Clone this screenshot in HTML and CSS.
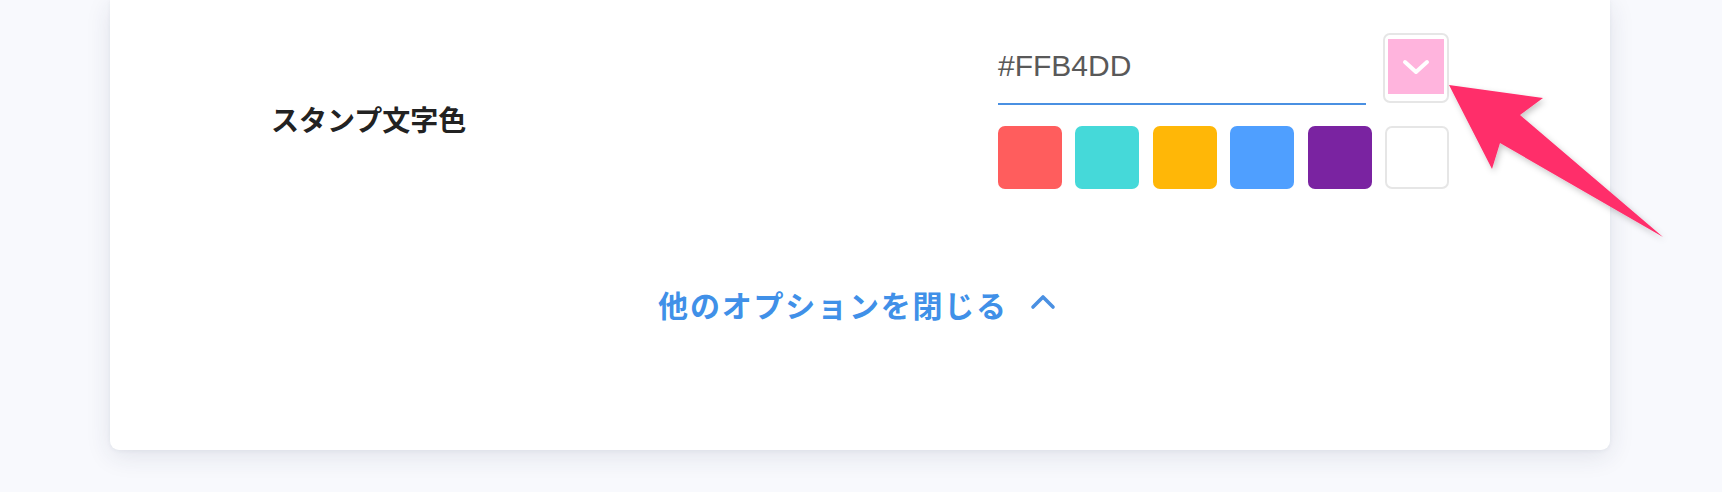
FILE: index.html
```html
<!DOCTYPE html>
<html lang="ja">
<head>
<meta charset="utf-8">
<title>スタンプ文字色</title>
<link rel="stylesheet" href="styles.css">
</head>
<body>
<div class="page">
  <div class="card">
    <div class="row">
      <div class="label">スタンプ文字色</div>
      <div class="control">
        <div class="input-row">
          <div class="hex-input">#FFB4DD</div>
          <button class="picker" type="button">
            <span class="picker-swatch">
              <svg width="28" height="16" viewBox="0 0 28 16"><path d="M3 3 L14 13 L25 3" fill="none" stroke="#fff" stroke-width="4" stroke-linecap="round" stroke-linejoin="round"/></svg>
            </span>
          </button>
        </div>
        <div class="swatches">
          <span class="swatch red"></span>
          <span class="swatch teal"></span>
          <span class="swatch yellow"></span>
          <span class="swatch blue"></span>
          <span class="swatch purple"></span>
          <span class="swatch white"></span>
        </div>
      </div>
    </div>
    <div class="more">
      <span class="more-text">他のオプションを閉じる</span>
      <svg class="more-icon" width="26" height="16" viewBox="0 0 26 16"><path d="M3 13 L13 3 L23 13" fill="none" stroke="#4a90e2" stroke-width="3.6" stroke-linecap="round" stroke-linejoin="round"/></svg>
    </div>
  </div>
  <svg class="arrow" width="1722" height="492" viewBox="0 0 1722 492">
    <defs>
      <filter id="sh" x="-20%" y="-20%" width="140%" height="140%">
        <feDropShadow dx="2" dy="3" stdDeviation="3" flood-color="#000" flood-opacity="0.22"/>
      </filter>
    </defs>
    <polygon points="1449,85 1543,98 1520,115 1663,237 1500,143 1492,169" fill="#ff2d6b" filter="url(#sh)"/>
  </svg>
</div>
</body>
</html>
```
FILE: styles.css
```css
html, body {
  margin: 0;
  padding: 0;
}
body {
  background: #f8f9fd;
  font-family: "Noto Sans CJK JP", "Liberation Sans", sans-serif;
  width: 1722px;
  height: 492px;
  overflow: hidden;
}
.page {
  position: relative;
  width: 1722px;
  height: 492px;
}
.card {
  margin-left: 110px;
  width: 1500px;
  height: 450px;
  background: #fff;
  border-radius: 0 0 9px 9px;
  box-shadow: 0 6px 26px rgba(40, 50, 80, 0.11), 0 1px 4px rgba(40, 50, 80, 0.05);
  box-sizing: border-box;
  padding-top: 33px;
}
.row {
  display: flex;
  justify-content: space-between;
  align-items: flex-start;
  padding: 0 161px 0 161px;
}
.label {
  font-size: 28px;
  font-weight: 700;
  color: #222;
  line-height: 40px;
  margin-top: 66px;
}
.control {
  width: 451px;
  display: flex;
  flex-direction: column;
  gap: 21px;
}
.input-row {
  display: flex;
  justify-content: space-between;
  align-items: flex-start;
}
.hex-input {
  width: 368px;
  height: 72px;
  box-sizing: border-box;
  border-bottom: 2px solid #4a90e2;
  font-family: "Liberation Sans", Arial, sans-serif;
  font-size: 30px;
  color: #595959;
  line-height: 34px;
  padding-top: 16px;
}
.picker {
  width: 66px;
  height: 70px;
  box-sizing: border-box;
  border: 2px solid #e6e6e6;
  border-radius: 7px;
  background: #fff;
  padding: 4px 3px 7px 3px;
  margin: 0;
  display: flex;
}
.picker-swatch {
  flex: 1;
  background: #ffb4dd;
  display: flex;
  align-items: center;
  justify-content: center;
}
.swatches {
  display: flex;
  justify-content: space-between;
}
.swatch {
  width: 64px;
  height: 63px;
  border-radius: 7px;
  box-sizing: border-box;
}
.red { background: #ff5d5d; }
.teal { background: #45d9d9; }
.yellow { background: #ffb707; }
.blue { background: #4f9fff; }
.purple { background: #7a23a1; }
.white { background: #fff; border: 2px solid #e6e6e6; }
.more {
  display: flex;
  justify-content: center;
  align-items: center;
  gap: 22px;
  margin-top: 95px;
  margin-left: -6px;
  color: #4090e8;
}
.more-text {
  font-size: 30px;
  font-weight: 700;
  line-height: 40px;
  letter-spacing: 1.8px;
}
.more-icon {
  display: block;
  margin-top: -4px;
}
.arrow {
  position: absolute;
  left: 0;
  top: 0;
  pointer-events: none;
}
```
